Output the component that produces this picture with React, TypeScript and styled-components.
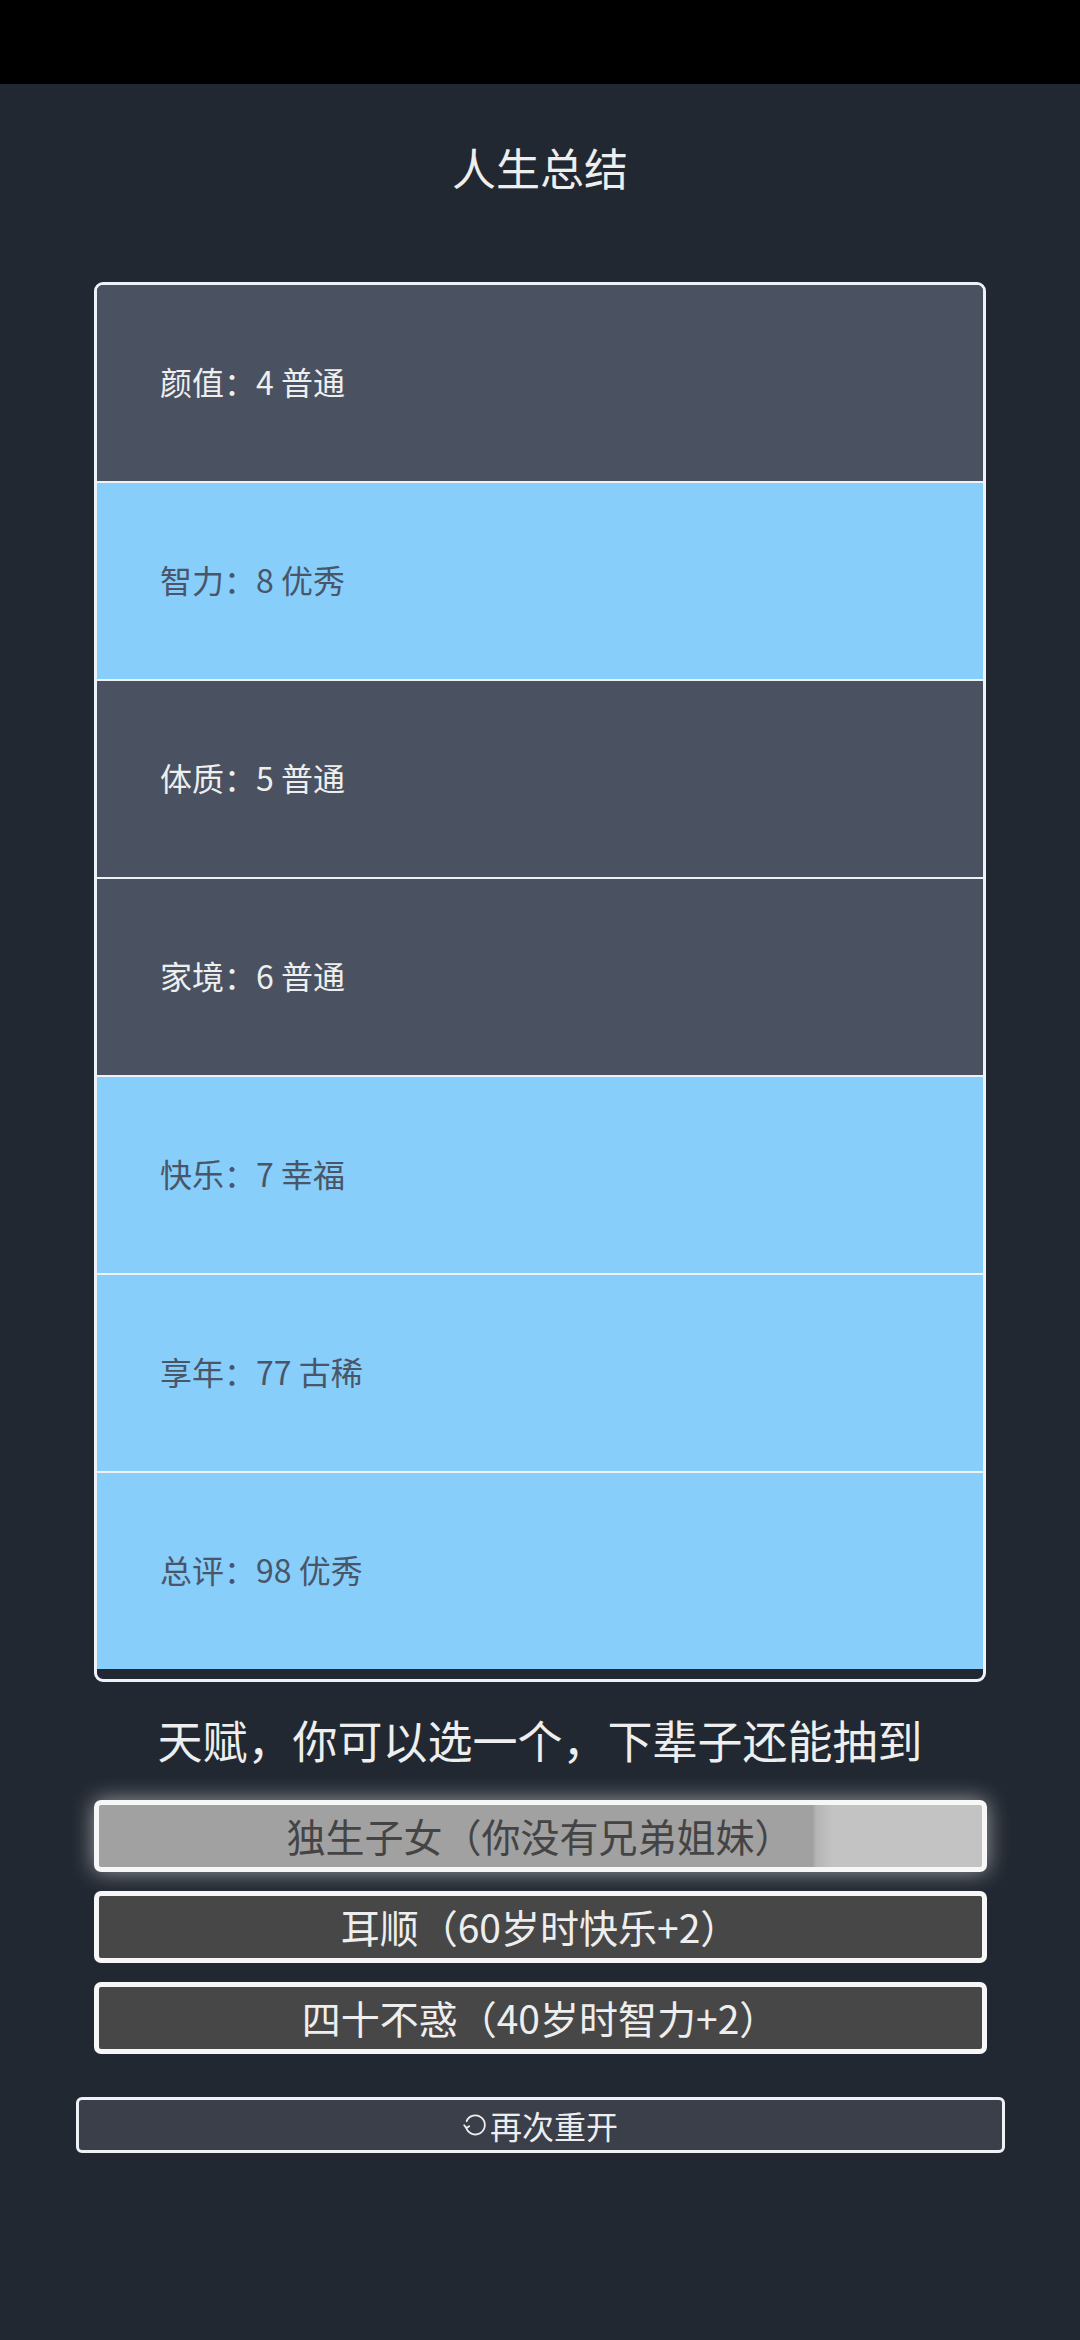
import React from 'react';
import styled, { createGlobalStyle } from 'styled-components';

// --- Theme ---
const PAGE_BG = '#222831';
const ROW_DARK = '#4a5261';
const ROW_BLUE = '#87cefa';
const LINE = '#eef1f5';
const LIGHT_TEXT = '#eeeeee';
const FONT = `"Noto Sans CJK SC", "Noto Sans", "Liberation Sans", sans-serif`;

const GlobalStyle = createGlobalStyle`
    html, body {
        margin: 0;
        padding: 0;
        background: ${PAGE_BG};
        font-family: ${FONT};
    }
    * { box-sizing: border-box; }
`;

const Screen = styled.div`
    width: 1080px;
    min-height: 2340px;
    background: ${PAGE_BG};
    display: flex;
    flex-direction: column;
    align-items: center;
`;

const StatusBar = styled.div`
    width: 100%;
    height: 84px;
    background: #000;
`;

const Title = styled.h1`
    margin: 52px 0 0;
    height: 62px;
    line-height: 62px;
    font-size: 44px;
    font-weight: 400;
    color: ${LIGHT_TEXT};
`;

const Panel = styled.div`
    margin-top: 84px;
    width: 892px;
    height: 1400px;
    border: 3px solid ${LINE};
    border-radius: 9px;
    background: ${PAGE_BG};
    overflow: hidden;
    display: flex;
    flex-direction: column;
`;

const Row = styled.div<{ $blue: boolean }>`
    flex: 0 0 auto;
    height: 196px;
    display: flex;
    align-items: center;
    padding-left: 63px;
    padding-bottom: 4px;
    background: ${({ $blue }) => ($blue ? ROW_BLUE : ROW_DARK)};
    color: ${({ $blue }) => ($blue ? '#4a5568' : LIGHT_TEXT)};
    font-size: 32px;
    &:not(:last-child) {
        border-bottom: 2px solid ${LINE};
        height: 198px;
    }
`;

const Subtitle = styled.div`
    margin-top: 26px;
    height: 64px;
    line-height: 64px;
    font-size: 45px;
    color: ${LIGHT_TEXT};
`;

const TalentList = styled.div`
    margin-top: 28px;
    display: flex;
    flex-direction: column;
    gap: 19px;
`;

const TalentButton = styled.button<{ $selected: boolean }>`
    width: 893px;
    height: 72px;
    border: 5px solid #f7f7f7;
    border-radius: 7px;
    font-family: ${FONT};
    font-size: 39px;
    padding: 0 0 2px;
    display: flex;
    align-items: center;
    justify-content: center;
    cursor: pointer;
    color: ${({ $selected }) => ($selected ? '#444' : LIGHT_TEXT)};
    background: ${({ $selected }) =>
        $selected
            ? 'linear-gradient(to right, #a1a1a1 0%, #a1a1a1 80.8%, #b4b4b4 81.2%, #c3c3c3 83%, #c3c3c3 100%)'
            : '#474747'};
    box-shadow: ${({ $selected }) => ($selected ? '0 0 22px rgba(255, 255, 255, 0.55)' : 'none')};
`;

const RestartButton = styled.button`
    margin-top: 43px;
    width: 929px;
    height: 56px;
    border: 3px solid ${LINE};
    border-radius: 6px;
    background: #3a3f4a;
    color: ${LIGHT_TEXT};
    font-family: ${FONT};
    font-size: 32px;
    display: flex;
    align-items: center;
    justify-content: center;
    gap: 2px;
    padding: 0;
    cursor: pointer;
`;

const RefreshIcon = () => (
    <svg width="26" height="26" viewBox="0 0 26 26" fill="none">
        <path
            d="M4.2 15.5 A9.5 9.5 0 1 0 4.6 9.2"
            stroke={LIGHT_TEXT}
            strokeWidth="1.8"
            strokeLinecap="round"
        />
        <path d="M2.2 13.2 L4.3 16 L7.2 14.3" stroke={LIGHT_TEXT} strokeWidth="1.8" strokeLinecap="round" strokeLinejoin="round" />
    </svg>
);

const stats = [
    { label: '颜值', value: '4 普通', blue: false },
    { label: '智力', value: '8 优秀', blue: true },
    { label: '体质', value: '5 普通', blue: false },
    { label: '家境', value: '6 普通', blue: false },
    { label: '快乐', value: '7 幸福', blue: true },
    { label: '享年', value: '77 古稀', blue: true },
    { label: '总评', value: '98 优秀', blue: true },
];

const talents = [
    { text: '独生子女（你没有兄弟姐妹）', selected: true },
    { text: '耳顺（60岁时快乐+2）', selected: false },
    { text: '四十不惑（40岁时智力+2）', selected: false },
];

const App: React.FC = () => {
    return (
        <>
            <GlobalStyle />
            <Screen>
                <StatusBar />
                <Title>人生总结</Title>
                <Panel>
                    {stats.map((s) => (
                        <Row key={s.label} $blue={s.blue}>
                            {s.label}：{s.value}
                        </Row>
                    ))}
                </Panel>
                <Subtitle>天赋，你可以选一个，下辈子还能抽到</Subtitle>
                <TalentList>
                    {talents.map((t) => (
                        <TalentButton key={t.text} $selected={t.selected}>
                            {t.text}
                        </TalentButton>
                    ))}
                </TalentList>
                <RestartButton>
                    <RefreshIcon />
                    再次重开
                </RestartButton>
            </Screen>
        </>
    );
};

export default App;
